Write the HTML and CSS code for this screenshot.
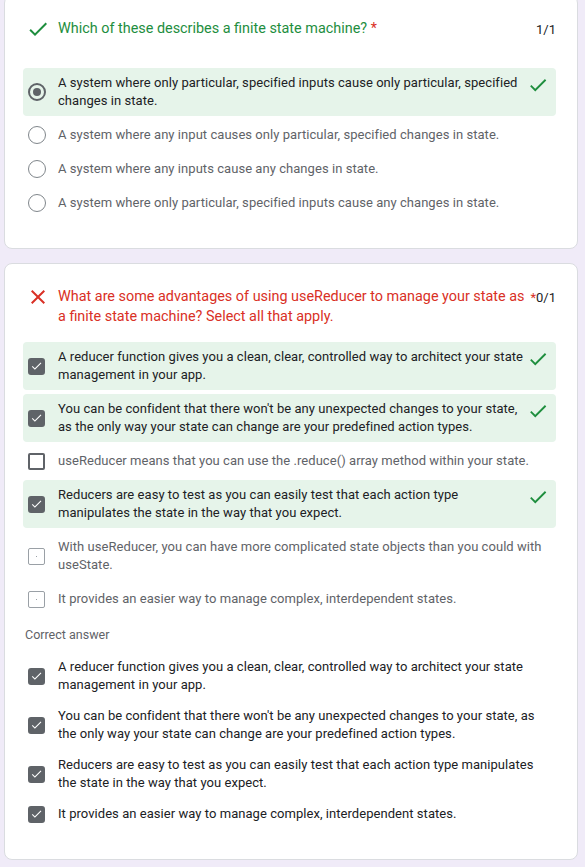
FILE: index.html
```html
<!DOCTYPE html>
<html lang="en">
<head>
<meta charset="utf-8">
<title>Quiz results</title>
<link rel="stylesheet" href="styles.css">
</head>
<body>
<main class="page">
  <section class="card card--first">
    <div class="qhead qhead--single">
      <span class="qicon">
        <svg class="ico-check" viewBox="0 0 24 24" width="24" height="24"><path d="M9 16.17L4.83 12l-1.42 1.41L9 19 21 7l-1.41-1.41z"/></svg>
      </span>
      <h2 class="qtitle qtitle--ok">Which of these describes a finite state machine? <span class="req">*</span></h2>
      <span class="points">1/1</span>
    </div>
    <ul class="opts">
      <li class="opt opt--correct">
        <span class="ctl"><span class="radio radio--on"></span></span>
        <span class="otext otext--chosen">A system where only particular, specified inputs cause only particular, specified changes in state.</span>
        <span class="mark"><svg class="ico-check" viewBox="0 0 24 24" width="22" height="22"><path d="M9 16.17L4.83 12l-1.42 1.41L9 19 21 7l-1.41-1.41z"/></svg></span>
      </li>
      <li class="opt">
        <span class="ctl"><span class="radio"></span></span>
        <span class="otext">A system where any input causes only particular, specified changes in state.</span>
      </li>
      <li class="opt">
        <span class="ctl"><span class="radio"></span></span>
        <span class="otext">A system where any inputs cause any changes in state.</span>
      </li>
      <li class="opt">
        <span class="ctl"><span class="radio"></span></span>
        <span class="otext">A system where only particular, specified inputs cause any changes in state.</span>
      </li>
    </ul>
  </section>

  <section class="card">
    <div class="qhead">
      <span class="qicon">
        <svg class="ico-x" viewBox="0 0 24 24" width="24" height="24"><path d="M19 6.41L17.59 5 12 10.59 6.41 5 5 6.41 10.59 12 5 17.59 6.41 19 12 13.41 17.59 19 19 17.59 13.41 12z"/></svg>
      </span>
      <h2 class="qtitle qtitle--bad">What are some advantages of using useReducer to manage your state as a finite state machine? Select all that apply.</h2>
      <span class="points"><span class="req">*</span>0/1</span>
    </div>
    <ul class="opts">
      <li class="opt opt--correct">
        <span class="ctl"><span class="cb cb--on"><svg viewBox="0 0 24 24" width="14" height="14"><path d="M9 16.17L4.83 12l-1.42 1.41L9 19 21 7l-1.41-1.41z"/></svg></span></span>
        <span class="otext otext--chosen">A reducer function gives you a clean, clear, controlled way to architect your state management in your app.</span>
        <span class="mark"><svg class="ico-check" viewBox="0 0 24 24" width="22" height="22"><path d="M9 16.17L4.83 12l-1.42 1.41L9 19 21 7l-1.41-1.41z"/></svg></span>
      </li>
      <li class="opt opt--correct">
        <span class="ctl"><span class="cb cb--on"><svg viewBox="0 0 24 24" width="14" height="14"><path d="M9 16.17L4.83 12l-1.42 1.41L9 19 21 7l-1.41-1.41z"/></svg></span></span>
        <span class="otext otext--chosen">You can be confident that there won't be any unexpected changes to your state, as the only way your state can change are your predefined action types.</span>
        <span class="mark"><svg class="ico-check" viewBox="0 0 24 24" width="22" height="22"><path d="M9 16.17L4.83 12l-1.42 1.41L9 19 21 7l-1.41-1.41z"/></svg></span>
      </li>
      <li class="opt">
        <span class="ctl"><span class="cb"></span></span>
        <span class="otext">useReducer means that you can use the .reduce() array method within your state.</span>
      </li>
      <li class="opt opt--correct">
        <span class="ctl"><span class="cb cb--on"><svg viewBox="0 0 24 24" width="14" height="14"><path d="M9 16.17L4.83 12l-1.42 1.41L9 19 21 7l-1.41-1.41z"/></svg></span></span>
        <span class="otext otext--chosen">Reducers are easy to test as you can easily test that each action type manipulates the state in the way that you expect.</span>
        <span class="mark"><svg class="ico-check" viewBox="0 0 24 24" width="22" height="22"><path d="M9 16.17L4.83 12l-1.42 1.41L9 19 21 7l-1.41-1.41z"/></svg></span>
      </li>
      <li class="opt">
        <span class="ctl"><span class="cb cb--off"></span></span>
        <span class="otext">With useReducer, you can have more complicated state objects than you could with useState.</span>
      </li>
      <li class="opt">
        <span class="ctl"><span class="cb cb--off"></span></span>
        <span class="otext">It provides an easier way to manage complex, interdependent states.</span>
      </li>
    </ul>
    <p class="label">Correct answer</p>
    <ul class="opts opts--answer">
      <li class="opt opt--wide">
        <span class="ctl"><span class="cb cb--on"><svg viewBox="0 0 24 24" width="14" height="14"><path d="M9 16.17L4.83 12l-1.42 1.41L9 19 21 7l-1.41-1.41z"/></svg></span></span>
        <span class="otext otext--chosen">A reducer function gives you a clean, clear, controlled way to architect your state management in your app.</span>
      </li>
      <li class="opt opt--wide">
        <span class="ctl"><span class="cb cb--on"><svg viewBox="0 0 24 24" width="14" height="14"><path d="M9 16.17L4.83 12l-1.42 1.41L9 19 21 7l-1.41-1.41z"/></svg></span></span>
        <span class="otext otext--chosen">You can be confident that there won't be any unexpected changes to your state, as the only way your state can change are your predefined action types.</span>
      </li>
      <li class="opt opt--wide">
        <span class="ctl"><span class="cb cb--on"><svg viewBox="0 0 24 24" width="14" height="14"><path d="M9 16.17L4.83 12l-1.42 1.41L9 19 21 7l-1.41-1.41z"/></svg></span></span>
        <span class="otext otext--chosen">Reducers are easy to test as you can easily test that each action type manipulates the state in the way that you expect.</span>
      </li>
      <li class="opt opt--wide">
        <span class="ctl"><span class="cb cb--on"><svg viewBox="0 0 24 24" width="14" height="14"><path d="M9 16.17L4.83 12l-1.42 1.41L9 19 21 7l-1.41-1.41z"/></svg></span></span>
        <span class="otext otext--chosen">It provides an easier way to manage complex, interdependent states.</span>
      </li>
    </ul>
  </section>
</main>
</body>
</html>
```

FILE: styles.css
```css
* { box-sizing: border-box; }

html, body {
  margin: 0;
  padding: 0;
  background: #f0ebf8;
}

body {
  font-family: Roboto, "Liberation Sans", Arial, sans-serif;
  color: #202124;
  overflow: hidden;
}

.page {
  display: flex;
  flex-direction: column;
  gap: 14px;
  padding: 0 7px 0 4px;
}

.card {
  background: #fff;
  border: 1px solid #dadce0;
  border-radius: 8px;
  padding: 23px 21px 30px 18px;
}

.card--first {
  margin-top: -5px;
}

.qhead {
  display: flex;
  align-items: flex-start;
  padding-left: 3px;
  margin-bottom: 15px;
}

.qhead--single {
  margin-bottom: 28px;
}

.qicon {
  flex: 0 0 32px;
  height: 20px;
  display: flex;
  align-items: center;
}

.ico-check { fill: #1e8e3e; display: block; }
.ico-x { fill: #d93025; display: block; }

.qtitle {
  flex: 1;
  margin: 0;
  font-size: 14.4px;
  font-weight: 400;
  line-height: 20px;
  letter-spacing: 0;
}

.qtitle--ok { color: #1e8e3e; }
.qtitle--bad { color: #d93025; padding-right: 4px; }

.req { color: #d93025; }

.points {
  font-size: 13px;
  line-height: 20px;
  color: #202124;
  white-space: nowrap;
  padding-top: 1px;
}

.opts {
  list-style: none;
  margin: 0;
  padding: 0;
  display: flex;
  flex-direction: column;
  gap: 4px;
}

.opts--answer { gap: 1px; }

.opt {
  display: flex;
  align-items: flex-start;
  padding: 6px 7px 6px 5px;
  border-radius: 4px;
  min-height: 30px;
}

.opt--correct { background: #e6f4ea; }

.ctl {
  flex: 0 0 30px;
  align-self: center;
  display: flex;
  align-items: center;
}

.otext {
  flex: 1;
  font-size: 13px;
  line-height: 18px;
  color: #5f6368;
  letter-spacing: 0.05px;
}

.otext--chosen { color: #202124; }

.opt--wide .otext { padding-right: 6px; }

.mark {
  flex: 0 0 21px;
  display: flex;
  justify-content: flex-end;
  margin-top: 0;
}

.mark svg { flex: none; }

.radio {
  width: 18px;
  height: 18px;
  border-radius: 50%;
  border: 1.5px solid #80868b;
  display: flex;
  align-items: center;
  justify-content: center;
}

.radio--on {
  border: 2px solid #5f6368;
}

.radio--on::after {
  content: "";
  width: 8px;
  height: 8px;
  border-radius: 50%;
  background: #5f6368;
}

.cb {
  width: 17px;
  height: 17px;
  border: 2px solid #5f6368;
  border-radius: 2px;
  display: flex;
  align-items: center;
  justify-content: center;
}

.cb--on {
  background: #5f6368;
  border-color: #5f6368;
  border-radius: 3px;
}

.cb--on svg { fill: #fff; display: block; }

.cb--off {
  border: 1.5px solid #9aa0a6;
}

.cb--off::after {
  content: "";
  width: 1px;
  height: 1px;
  background: #9aa0a6;
}

.label {
  margin: 12px 0 8px 2px;
  font-size: 12.5px;
  line-height: 18px;
  color: #5f6368;
}
```
